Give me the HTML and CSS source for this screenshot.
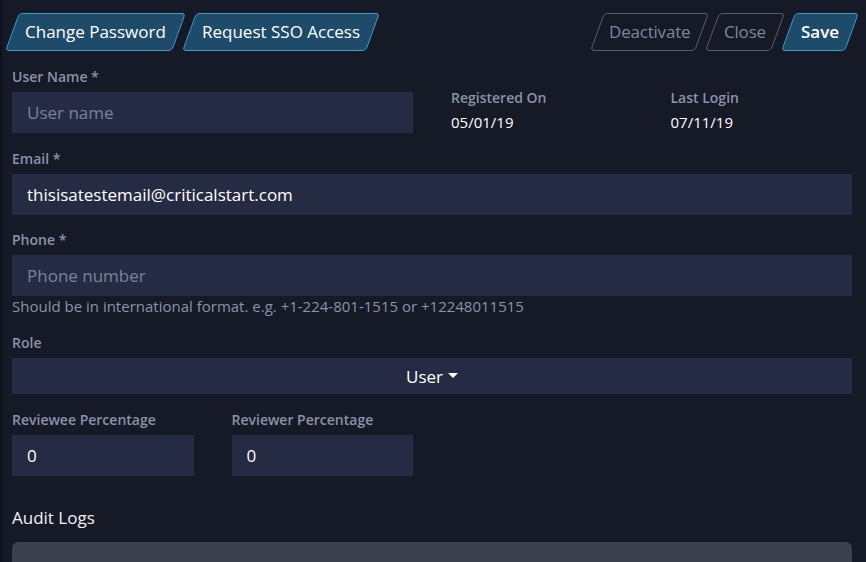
FILE: index.html
```html
<!DOCTYPE html>
<html lang="en">
<head>
<meta charset="utf-8">
<title>User</title>
<link rel="stylesheet" href="styles.css">
</head>
<body>
<div class="page">
  <div class="toolbar">
    <div class="btn-group">
      <button class="btn btn-primary"><span>Change Password</span></button>
      <button class="btn btn-primary"><span>Request SSO Access</span></button>
    </div>
    <div class="btn-group">
      <button class="btn btn-outline"><span>Deactivate</span></button>
      <button class="btn btn-outline"><span>Close</span></button>
      <button class="btn btn-primary btn-bold"><span>Save</span></button>
    </div>
  </div>

  <div class="grid">
    <div class="field span2">
      <label class="label">User Name *</label>
      <input class="input" type="text" placeholder="User name">
    </div>
    <div class="meta">
      <div class="label">Registered On</div>
      <div class="meta-value">05/01/19</div>
    </div>
    <div class="meta">
      <div class="label">Last Login</div>
      <div class="meta-value">07/11/19</div>
    </div>

    <div class="field span4">
      <label class="label">Email *</label>
      <input class="input" type="text" value="thisisatestemail@criticalstart.com">
    </div>

    <div class="field span4">
      <label class="label">Phone *</label>
      <input class="input" type="text" placeholder="Phone number">
      <div class="help">Should be in international format. e.g. +1-224-801-1515 or +12248011515</div>
    </div>

    <div class="field span4">
      <label class="label">Role</label>
      <div class="select">User <span class="caret"></span></div>
    </div>

    <div class="field">
      <label class="label">Reviewee Percentage</label>
      <input class="input" type="text" value="0">
    </div>
    <div class="field">
      <label class="label">Reviewer Percentage</label>
      <input class="input" type="text" value="0">
    </div>
  </div>

  <h2 class="section-title">Audit Logs</h2>
  <div class="audit-box"></div>
</div>
</body>
</html>
```
FILE: styles.css
```css
* { box-sizing: border-box; }
html, body {
  margin: 0;
  padding: 0;
  height: 100%;
  overflow: hidden;
}
body {
  background: #161a27;
  font-family: "Open Sans", "Noto Sans", sans-serif;
  color: #ffffff;
  border-left: 2px solid #0f121b;
}
.page {
  padding: 13px 14px 0 10px;
}
.toolbar {
  display: flex;
  justify-content: space-between;
  align-items: center;
}
.btn-group {
  display: flex;
  gap: 10px;
}
.btn {
  height: 38px;
  padding: 0 12px;
  font-family: inherit;
  font-size: 17px;
  line-height: 36px;
  border-radius: 4px;
  transform: skewX(-20deg);
  cursor: pointer;
  white-space: nowrap;
}
.btn span {
  display: inline-block;
  transform: skewX(20deg);
}
.btn-primary {
  background: #1e4b69;
  border: 1px solid #3a9fcb;
  color: #ffffff;
}
.btn-outline {
  background: transparent;
  border: 1px solid #555e70;
  color: #7d879c;
  padding: 0 11px;
  letter-spacing: -0.2px;
}
.btn-bold { font-weight: 600; }

.grid {
  display: grid;
  grid-template-columns: repeat(4, 1fr);
  column-gap: 38px;
  row-gap: 15.5px;
  margin-top: 16px;
}
.span2 { grid-column: span 2; }
.span4 { grid-column: span 4; }
.field {
  display: flex;
  flex-direction: column;
}
.label {
  font-size: 14px;
  line-height: 20px;
  font-weight: 600;
  color: #8a93a9;
  margin-bottom: 5px;
}
.input {
  height: 41px;
  width: 100%;
  background: #262b44;
  border: none;
  outline: none;
  padding: 0 15px;
  font-family: inherit;
  font-size: 17px;
  color: #ffffff;
}
.input::placeholder { color: #7a8299; }
.help {
  font-size: 15px;
  line-height: 21.5px;
  color: #8a93a9;
}
.meta {
  padding-top: 21px;
}
.meta .label { margin-bottom: 4px; }
.meta-value {
  font-size: 15px;
  line-height: 20px;
  font-weight: 500;
  color: #ffffff;
}
.select {
  height: 36px;
  background: #262b44;
  display: flex;
  align-items: center;
  justify-content: center;
  font-size: 17px;
  color: #ffffff;
  gap: 5px;
}
.caret {
  width: 0;
  height: 0;
  border-left: 5px solid transparent;
  border-right: 5px solid transparent;
  border-top: 5px solid #ffffff;
  margin-top: -2px;
}
.section-title {
  font-size: 17px;
  line-height: 24px;
  font-weight: 400;
  color: #f0f2f6;
  margin: 30px 0 12px 0;
}
.audit-box {
  height: 21px;
  background: #3c404c;
  border-radius: 6px 6px 0 0;
}
```
